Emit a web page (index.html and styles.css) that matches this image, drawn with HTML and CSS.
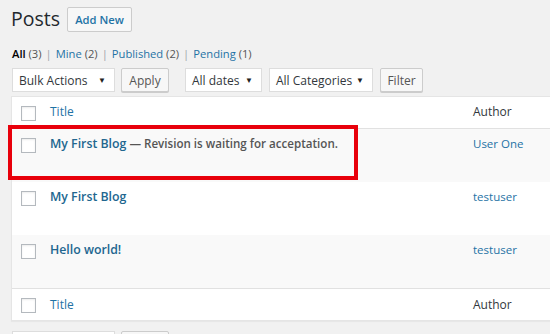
FILE: index.html
```html
<!DOCTYPE html>
<html lang="en">
<head>
<meta charset="utf-8">
<title>Posts</title>
<link rel="stylesheet" href="styles.css">
</head>
<body>
<div class="wrap">
  <div class="page-head">
    <h1 class="page-title">Posts</h1>
    <a class="add-new" href="#">Add New</a>
  </div>
  <ul class="subsubsub">
    <li><b class="current">All</b> <span class="count">(3)</span><span class="sep">|</span></li>
    <li><a href="#">Mine</a> <span class="count">(2)</span><span class="sep">|</span></li>
    <li><a href="#">Published</a> <span class="count">(2)</span><span class="sep">|</span></li>
    <li><a href="#">Pending</a> <span class="count">(1)</span></li>
  </ul>
  <div class="tablenav">
    <div class="select w-bulk">Bulk Actions<span class="arrow">▼</span></div>
    <div class="button w-apply">Apply</div>
    <div class="select w-dates">All dates<span class="arrow">▼</span></div>
    <div class="select w-cats">All Categories<span class="arrow">▼</span></div>
    <div class="button w-filter">Filter</div>
  </div>
  <div class="list">
    <div class="row head-row">
      <span class="cb"></span>
      <a class="col-title" href="#">Title</a>
      <span class="col-author">Author</span>
    </div>
    <div class="row item alt">
      <span class="cb"></span>
      <div class="col-title"><a class="post-link" href="#">My First Blog</a> <span class="state">— Revision is waiting for acceptation.</span></div>
      <a class="col-author link" href="#">User One</a>
    </div>
    <div class="row item">
      <span class="cb"></span>
      <div class="col-title"><a class="post-link" href="#">My First Blog</a></div>
      <a class="col-author link" href="#">testuser</a>
    </div>
    <div class="row item alt">
      <span class="cb"></span>
      <div class="col-title"><a class="post-link" href="#">Hello world!</a></div>
      <a class="col-author link" href="#">testuser</a>
    </div>
    <div class="row foot-row">
      <span class="cb"></span>
      <a class="col-title" href="#">Title</a>
      <span class="col-author">Author</span>
    </div>
  </div>
  <div class="tablenav bottom">
    <div class="select w-bulk"></div>
    <div class="button w-apply"></div>
  </div>
  <div class="highlight"></div>
</div>
</body>
</html>
```

FILE: styles.css
```css
html, body {
  margin: 0;
  padding: 0;
  background: #f1f1f1;
  overflow: hidden;
}
body {
  font-family: "Open Sans", "Noto Sans", sans-serif;
  font-size: 12px;
  color: #444;
}
a { text-decoration: none; color: #1f73a5; }

.wrap {
  position: relative;
  padding: 6px 0 0 11px;
}

.page-head {
  display: flex;
  align-items: center;
  gap: 7px;
  height: 26px;
}
.page-title {
  margin: 0;
  font-weight: 400;
  font-size: 19.5px;
  color: #23282d;
  line-height: 26px;
}
.add-new {
  display: flex;
  align-items: center;
  justify-content: center;
  width: 63px;
  height: 23px;
  border: 1px solid #ccc;
  border-radius: 2px;
  background: #f7f7f7;
  color: #1f73a5;
  font-weight: 600;
  font-size: 11.2px;
}

.subsubsub {
  list-style: none;
  margin: 0;
  padding: 14px 0 0 1px;
  display: flex;
  font-size: 11.2px;
  line-height: 16px;
  height: 16px;
}
.subsubsub li { white-space: pre; }
.current { color: #000; font-weight: 600; }
.count { color: #555; }
.sep { color: #a0a5aa; padding: 0 4px; }

.tablenav {
  display: flex;
  gap: 6px;
  margin-top: 6px;
  padding-left: 1px;
  height: 24px;
}
.select, .button {
  box-sizing: border-box;
  height: 24px;
  display: flex;
  align-items: center;
  font-size: 12px;
  color: #32373c;
}
.select {
  background: #fff;
  border: 1px solid #ddd;
  padding-left: 6px;
  position: relative;
}
.arrow {
  position: absolute;
  right: 8px;
  top: 5px;
  font-size: 8px;
  color: #222;
}
.button {
  justify-content: center;
  background: #f7f7f7;
  border: 1px solid #ccc;
  border-radius: 2px;
  color: #555;
  box-shadow: 0 1px 0 #ccc;
}
.w-bulk { width: 103px; }
.w-apply { width: 48px; margin-right: 10px; }
.w-dates { width: 77px; }
.w-cats { width: 104px; margin-left: 1px; }
.w-filter { width: 43px; margin-left: 1px; }

.list {
  margin-top: 4px;
  width: 620px;
  background: #fff;
  border: 1px solid #e5e5e5;
  box-shadow: 0 1px 1px rgba(0,0,0,.04);
}
.row {
  display: grid;
  grid-template-columns: 38px 423px 1fr;
  box-sizing: border-box;
}
.head-row, .foot-row {
  height: 32px;
  align-items: start;
}
.head-row { border-bottom: 1px solid #e1e1e1; }
.foot-row { border-top: 1px solid #e1e1e1; }
.item { height: 53px; }
.alt { background: #f9f9f9; }

.cb {
  box-sizing: border-box;
  width: 15px;
  height: 15px;
  border: 1px solid #b4b9be;
  background: #fff;
  margin: 9px 0 0 9px;
  box-shadow: inset 0 1px 2px rgba(0,0,0,.08);
}
.item .cb { margin-top: 9px; }

.col-title, .col-author {
  font-size: 12px;
  line-height: 16px;
  padding-top: 7px;
}
.foot-row .col-title, .foot-row .col-author { padding-top: 8px; }
.item .col-title, .item .col-author { padding-top: 7px; }
.head-row .col-author, .foot-row .col-author { color: #32373c; }
.post-link {
  font-weight: 600;
  font-size: 12.3px;
  color: #21668f;
}
.state {
  font-weight: 600;
  font-size: 11.6px;
  color: #555;
}
.item .col-author { font-size: 11.5px; }

.tablenav.bottom { margin-top: 10px; }

.highlight {
  position: absolute;
  left: 8px;
  top: 125px;
  width: 350px;
  height: 55px;
  box-sizing: border-box;
  border: 4px solid #e8000b;
  pointer-events: none;
}
```
